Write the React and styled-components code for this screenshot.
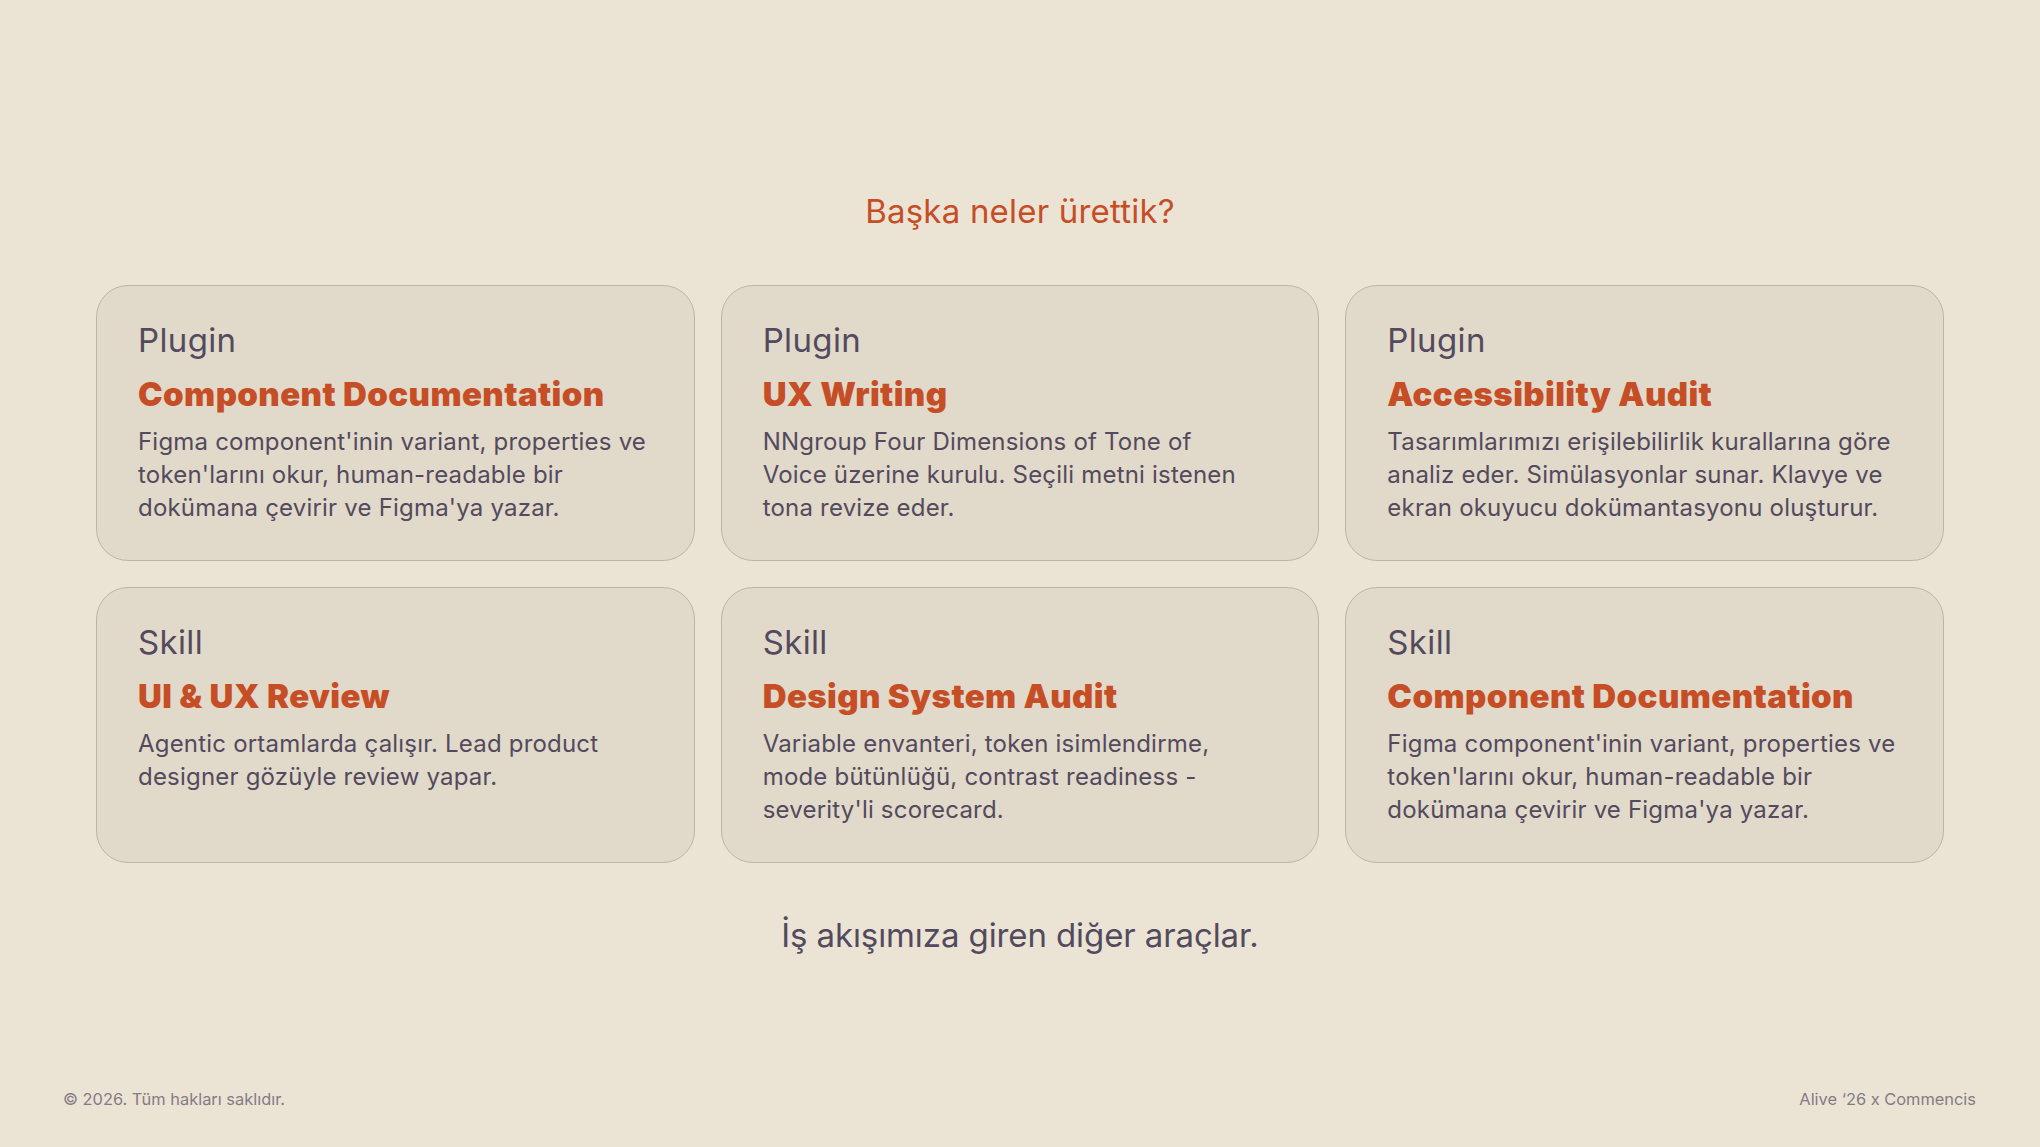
import React from "react";
import styled, { createGlobalStyle } from "styled-components";

const Global = createGlobalStyle`
  html, body { margin: 0; padding: 0; background: #ebe4d5; }
  body { font-family: "Inter", "Liberation Sans", sans-serif; }
`;
const Page = styled.div`
  width: 2040px; height: 1147px; box-sizing: border-box; display: flex; flex-direction: column;
  background: #ebe4d5; color: #534a5e; overflow: hidden;
`;
const Main = styled.main`
  padding: 189px 96px 0; flex: 1; display: flex; flex-direction: column; align-items: stretch;
`;
const Title = styled.h2`
  margin: 0 0 52px; font-size: 33px; line-height: 44px; font-weight: 400; text-align: center; color: #c64e26;
  letter-spacing: 0.2px;
`;
const Grid = styled.div`
  display: grid; grid-template-columns: repeat(3, 1fr); grid-auto-rows: 276px; gap: 26px;
`;
const Card = styled.article`
  box-sizing: border-box; background: #e1d9c9; border: 1.5px solid #bfb4a3; border-radius: 32px;
  padding: 34px 40px 0 41px;
`;
const Kind = styled.div`
  font-size: 33px; line-height: 40px; color: #534a5e; letter-spacing: 0.35px;
`;
const Name = styled.h3`
  margin: 14px 0 11px; font-size: 33px; line-height: 40px; font-weight: 900; color: #c64e26; letter-spacing: 0.4px;
`;
const Desc = styled.p`
  margin: 0; font-size: 24px; line-height: 33px; color: #534a5e; white-space: nowrap; letter-spacing: 0.2px;
`;
const Tagline = styled.p`
  margin: 50px 0 0; font-size: 33px; line-height: 44px; text-align: center; color: #534a5e; letter-spacing: -0.1px;
`;
const Footer = styled.footer`
  display: flex; justify-content: space-between; padding: 0 64px 36px 63px; font-size: 16.4px; line-height: 24px; color: #847b84;
`;

const cards = [
  ["Plugin", "Component Documentation", ["Figma component'inin variant, properties ve", "token'larını okur, human-readable bir", "dokümana çevirir ve Figma'ya yazar."]],
  ["Plugin", "UX Writing", ["NNgroup Four Dimensions of Tone of", "Voice üzerine kurulu. Seçili metni istenen", "tona revize eder."]],
  ["Plugin", "Accessibility Audit", ["Tasarımlarımızı erişilebilirlik kurallarına göre", "analiz eder. Simülasyonlar sunar. Klavye ve", "ekran okuyucu dokümantasyonu oluşturur."]],
  ["Skill", "UI & UX Review", ["Agentic ortamlarda çalışır. Lead product", "designer gözüyle review yapar."]],
  ["Skill", "Design System Audit", ["Variable envanteri, token isimlendirme,", "mode bütünlüğü, contrast readiness -", "severity'li scorecard."]],
  ["Skill", "Component Documentation", ["Figma component'inin variant, properties ve", "token'larını okur, human-readable bir", "dokümana çevirir ve Figma'ya yazar."]],
];

export default function App() {
  return (
    <Page>
      <Global />
      <Main>
        <Title>Başka neler ürettik?</Title>
        <Grid>
          {cards.map(([k, n, d], i) => (
            <Card key={i}>
              <Kind>{k}</Kind>
              <Name>{n}</Name>
              <Desc>{d.map((l, j) => <React.Fragment key={j}>{l}{j < d.length - 1 && <br />}</React.Fragment>)}</Desc>
            </Card>
          ))}
        </Grid>
        <Tagline>İş akışımıza giren diğer araçlar.</Tagline>
      </Main>
      <Footer><span>© 2026. Tüm hakları saklıdır.</span><span>Alive ‘26 x Commencis</span></Footer>
    </Page>
  );
}
